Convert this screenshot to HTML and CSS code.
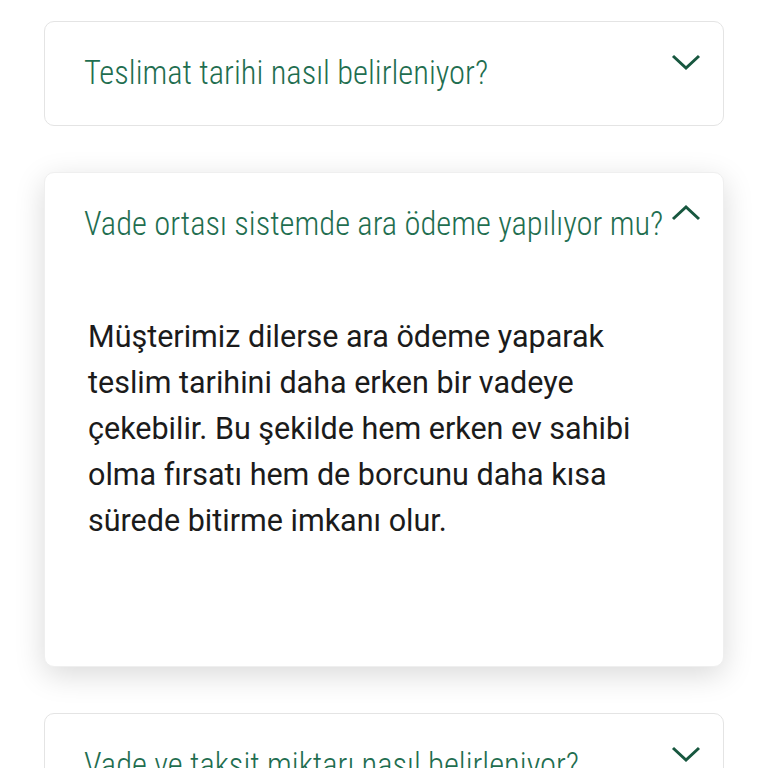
FILE: index.html
```html
<!DOCTYPE html>
<html lang="tr">
<head>
    <meta charset="UTF-8">
    <meta name="viewport" content="width=device-width, initial-scale=1.0">
    <title>Sıkça Sorulan Sorular</title>
    <link rel="stylesheet" href="styles.css">
</head>
<body>

    <!-- FAQ list -->
    <div class="faq">
        <div class="faq-item">
            <div class="faq-head">
                <span class="faq-title">Teslimat tarihi nasıl belirleniyor?</span>
                <svg class="chevron" viewBox="0 0 30 18"><polyline points="2,3 15,15 28,3"/></svg>
            </div>
        </div>

        <div class="faq-item open">
            <div class="faq-head">
                <span class="faq-title">Vade ortası sistemde ara ödeme yapılıyor mu?</span>
                <svg class="chevron" viewBox="0 0 30 18"><polyline points="2,15 15,3 28,15"/></svg>
            </div>
            <p class="faq-body">Müşterimiz dilerse ara ödeme yaparak teslim tarihini daha erken bir vadeye çekebilir. Bu şekilde hem erken ev sahibi olma fırsatı hem de borcunu daha kısa sürede bitirme imkanı olur.</p>
        </div>

        <div class="faq-item">
            <div class="faq-head">
                <span class="faq-title">Vade ve taksit miktarı nasıl belirleniyor?</span>
                <svg class="chevron" viewBox="0 0 30 18"><polyline points="2,3 15,15 28,3"/></svg>
            </div>
        </div>
    </div>

</body>
</html>
```

FILE: styles.css
```css
* {
    margin: 0;
    padding: 0;
    box-sizing: border-box;
}

body {
    background: #fff;
    font-family: "Roboto Condensed", "Liberation Sans Narrow", "DejaVu Sans Condensed", sans-serif;
    overflow: hidden;
}

.faq {
    display: flex;
    flex-direction: column;
    gap: 46px;
    padding: 21px 44px 0 44px;
}

.faq-item {
    background: #fff;
    border: 1px solid #e4e4e4;
    border-radius: 10px;
}

.faq-item.open {
    border-color: #efefef;
    box-shadow: 0 8px 30px rgba(0, 0, 0, 0.15);
    padding-bottom: 122px;
}

.faq-head {
    display: flex;
    justify-content: space-between;
    align-items: flex-start;
    padding: 29px 22px 30px 39px;
}

.faq-title {
    font-size: 32.5px;
    line-height: 44px;
    color: #1f6e50;
    font-weight: 300;
}

.chevron {
    width: 30px;
    height: 18px;
    margin-top: 2px;
    flex-shrink: 0;
}

.chevron polyline {
    fill: none;
    stroke: #17573f;
    stroke-width: 3;
}

.faq-body {
    padding: 38px 50px 0 43px;
    font-family: Roboto, "Noto Sans", sans-serif;
    font-size: 30.5px;
    line-height: 46px;
    color: #1b1b1b;
}
```
